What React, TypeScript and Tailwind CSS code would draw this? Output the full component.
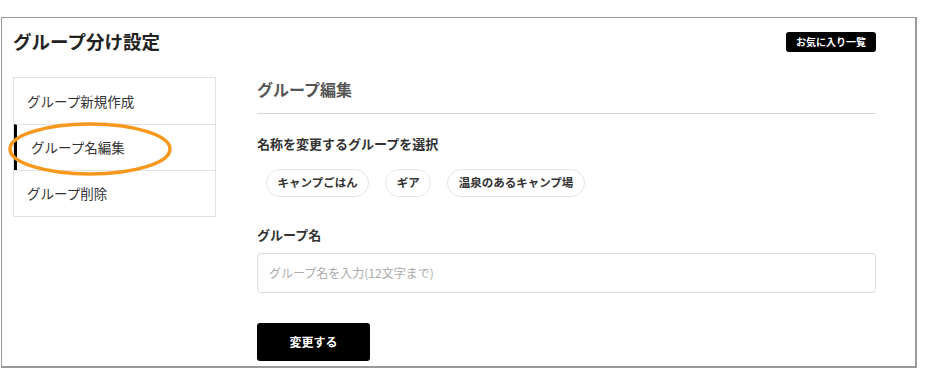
import React from 'react';

const menu = ['グループ新規作成', 'グループ名編集', 'グループ削除'];
const groups = ['キャンプごはん', 'ギア', '温泉のあるキャンプ場'];

export default function App() {
  return (
    <div
      className="w-[925px] h-[374px] bg-white pt-[17px] pl-px text-[#333]"
      style={{ fontFamily: '"Noto Sans CJK JP", "Noto Sans", sans-serif' }}
    >
      <div className="relative w-[916px] h-[351px] border border-[#9a9a9a] border-r-2 border-b-2 pl-[11px] pr-[39px]">
        {/* header */}
        <div className="flex items-center justify-between h-[46px] pt-px">
          <h1 className="text-[18.5px] font-bold text-[#222] leading-none">グループ分け設定</h1>
          <button className="h-[20px] px-[10px] bg-black text-white text-[10px] font-bold rounded-[3px] leading-none">
            お気に入り一覧
          </button>
        </div>

        <div className="flex mt-[13px]">
          {/* side menu */}
          <div className="w-[203px] h-[140px] border border-[#e2e2e2] flex flex-col shrink-0">
            {menu.map((m, i) => (
              <div
                key={m}
                className={
                  'h-[46px] flex items-center pl-[13px] text-[13.5px] text-[#333] ' +
                  (i > 0 ? 'border-t border-[#e2e2e2] ' : '') +
                  (i === 1 ? 'border-l-[3px] border-l-black pl-[14px] ' : '')
                }
              >
                {m}
              </div>
            ))}
          </div>

          {/* main */}
          <div className="ml-[41px] flex-1">
            <h2 className="text-[16px] font-bold text-[#555] leading-none pt-[4px]">グループ編集</h2>
            <div className="mt-[16px] border-t border-[#d6d6d0]" />

            <p className="mt-[23px] text-[13px] font-bold text-[#333] leading-none">名称を変更するグループを選択</p>
            <div className="flex gap-[16px] mt-[19px] pl-[9px]">
              {groups.map((g) => (
                <span
                  key={g}
                  className="h-[28px] px-[10.5px] flex items-center rounded-full border border-[#e6e6e6] text-[11.5px] font-bold text-[#333]"
                >
                  {g}
                </span>
              ))}
            </div>

            <p className="mt-[31px] text-[13px] font-bold text-[#333] leading-none">グループ名</p>
            <div className="mt-[12px] h-[40px] border border-[#dcdcdc] rounded-[4px] flex items-center pl-[11px]">
              <span className="text-[12px] text-[#aaa]">グループ名を入力(12文字まで)</span>
            </div>

            <button className="mt-[30px] w-[113px] h-[38px] bg-black text-white text-[12px] font-bold rounded-[3px]">
              変更する
            </button>
          </div>
        </div>

        {/* annotation ellipse */}
        <svg className="absolute left-[5px] top-[102px] pointer-events-none" width="172" height="60" viewBox="0 0 172 60">
          <ellipse cx="83" cy="29" rx="80" ry="25" fill="none" stroke="#f7981d" strokeWidth="3.5" />
        </svg>
      </div>
    </div>
  );
}
